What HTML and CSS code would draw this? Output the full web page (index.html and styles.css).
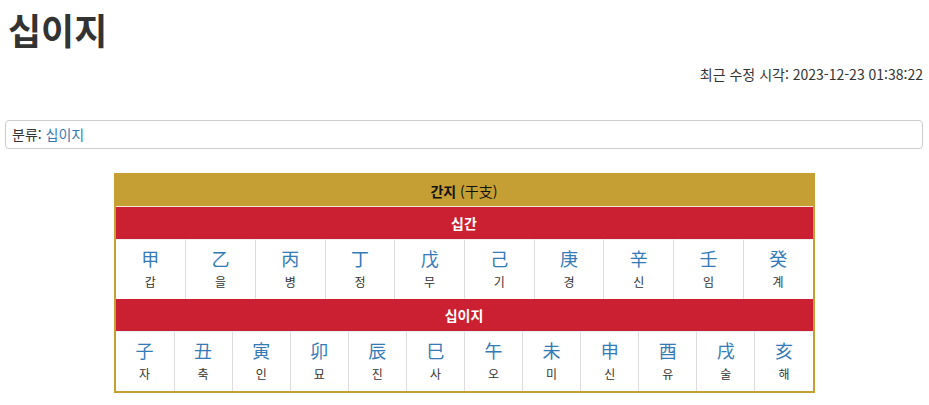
FILE: index.html
```html
<!DOCTYPE html>
<html lang="ko">
<head>
    <meta charset="UTF-8">
    <title>십이지</title>
    <link rel="stylesheet" href="styles.css">
</head>
<body>
    <div class="wrap">
        <h1 class="title">십이지</h1>
        <p class="modified">최근 수정 시각: 2023-12-23 01:38:22</p>

        <div class="category">분류: <a href="#">십이지</a></div>

        <div class="ganji">
            <div class="ganji-head"><b>간지</b> (干支)</div>
            <div class="ganji-sub">십간</div>
            <div class="ganji-row ten">
                <div class="cell"><a href="#">甲</a><span>갑</span></div>
                <div class="cell"><a href="#">乙</a><span>을</span></div>
                <div class="cell"><a href="#">丙</a><span>병</span></div>
                <div class="cell"><a href="#">丁</a><span>정</span></div>
                <div class="cell"><a href="#">戊</a><span>무</span></div>
                <div class="cell"><a href="#">己</a><span>기</span></div>
                <div class="cell"><a href="#">庚</a><span>경</span></div>
                <div class="cell"><a href="#">辛</a><span>신</span></div>
                <div class="cell"><a href="#">壬</a><span>임</span></div>
                <div class="cell"><a href="#">癸</a><span>계</span></div>
            </div>
            <div class="ganji-sub">십이지</div>
            <div class="ganji-row twelve">
                <div class="cell"><a href="#">子</a><span>자</span></div>
                <div class="cell"><a href="#">丑</a><span>축</span></div>
                <div class="cell"><a href="#">寅</a><span>인</span></div>
                <div class="cell"><a href="#">卯</a><span>묘</span></div>
                <div class="cell"><a href="#">辰</a><span>진</span></div>
                <div class="cell"><a href="#">巳</a><span>사</span></div>
                <div class="cell"><a href="#">午</a><span>오</span></div>
                <div class="cell"><a href="#">未</a><span>미</span></div>
                <div class="cell"><a href="#">申</a><span>신</span></div>
                <div class="cell"><a href="#">酉</a><span>유</span></div>
                <div class="cell"><a href="#">戌</a><span>술</span></div>
                <div class="cell"><a href="#">亥</a><span>해</span></div>
            </div>
        </div>
    </div>
</body>
</html>
```

FILE: styles.css
```css
* {
    margin: 0;
    padding: 0;
    box-sizing: border-box;
}

body {
    font-family: "Noto Sans CJK KR", "Noto Sans", sans-serif;
    font-size: 14px;
    color: #333;
    background: #fff;
}

a {
    color: #337ab7;
    text-decoration: none;
}

.wrap {
    padding: 0 6px 0 5px;
}

.title {
    font-size: 36px;
    font-weight: bold;
    line-height: 1.1;
    margin: 10px 0 0 3px;
    color: #333;
}

.modified {
    text-align: right;
    margin-top: 14px;
    line-height: 20px;
}

.category {
    margin-top: 36px;
    border: 1px solid #ccc;
    border-radius: 4px;
    padding: 3px 6px 4px;
    line-height: 20px;
}

.ganji {
    width: 701px;
    margin: 24px auto 0;
    border: 2px solid #c59f33;
    background: #fff;
    text-align: center;
}

.ganji-head {
    background: #c59f33;
    height: 32px;
    line-height: 32px;
    color: #111;
    border-bottom: 1px solid #f2ead2;
}

.ganji-sub {
    background: #cb1f32;
    color: #fff;
    font-weight: bold;
    height: 32px;
    line-height: 32px;
}

.ganji-row {
    display: grid;
    height: 60px;
}

.ganji-row.ten {
    grid-template-columns: repeat(10, 1fr);
}

.ganji-row.twelve {
    grid-template-columns: repeat(12, 1fr);
}

.cell {
    display: flex;
    flex-direction: column;
    align-items: center;
    justify-content: center;
    border-left: 1px solid #ddd;
    border-top: 1px solid #eee;
}

.cell:first-child {
    border-left: none;
}

.cell a {
    font-size: 18px;
    line-height: 24px;
}

.cell span {
    font-size: 12px;
    line-height: 20px;
    margin-top: 2px;
    color: #333;
}
```
